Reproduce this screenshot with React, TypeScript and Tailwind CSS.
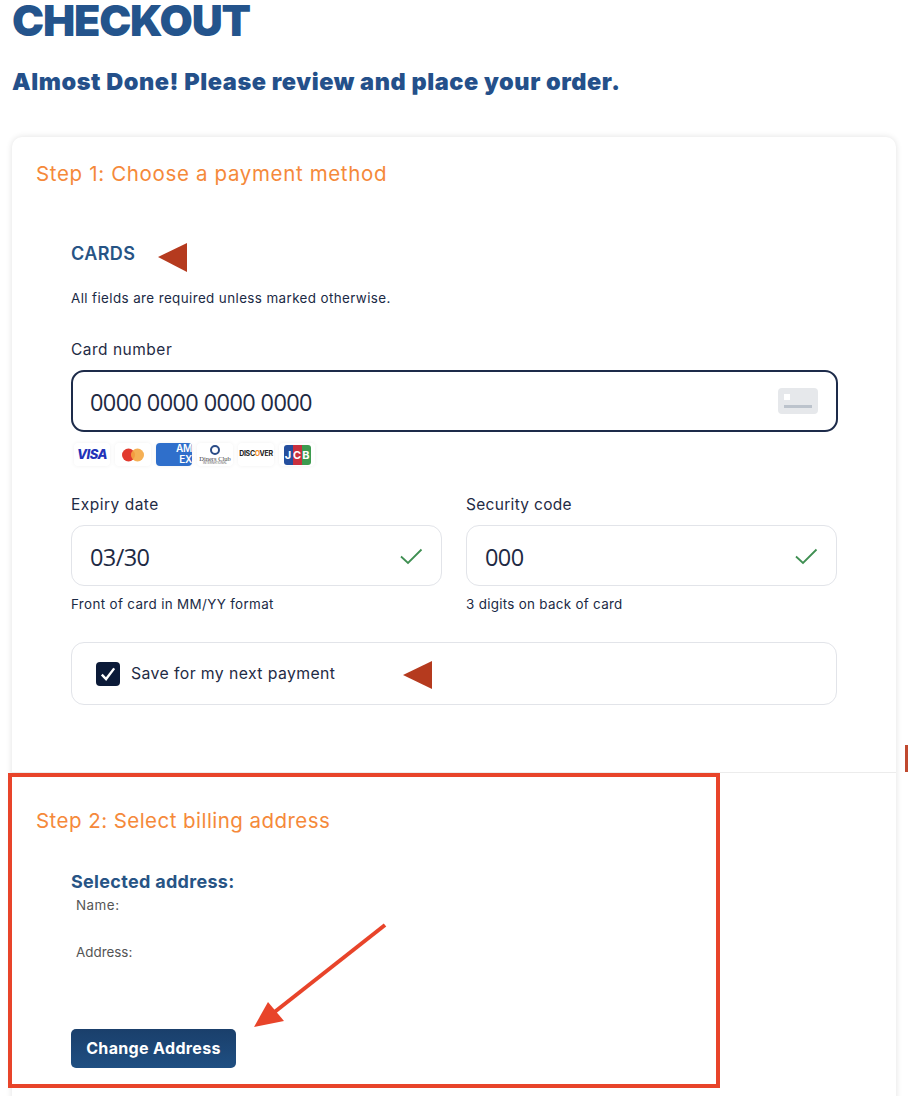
import React from "react";

const Chip = ({ children, cls = "" }: { children: React.ReactNode; cls?: string }) => (
  <div className={`w-9 h-[23px] rounded-[4px] bg-white shadow-[0_0_4px_rgba(0,0,0,0.06)] flex items-center justify-center overflow-hidden relative ${cls}`}>
    {children}
  </div>
);

const Check = () => (
  <svg width="24" height="24" viewBox="0 0 24 24" fill="none" stroke="#3f8f52" strokeWidth="1.8">
    <path d="M2 12.5 L9 19 L22.5 5.5" />
  </svg>
);

export default function App() {
  return (
    <div className="relative w-[908px] h-[1096px] overflow-hidden bg-white font-['Inter',sans-serif]">
      <div className="pl-3 h-[137px]">
        <h1 className="h-[46px] text-[43px] leading-[41px] font-black tracking-[-1.2px] text-[#24548c]">
          CHECKOUT
        </h1>
        <h2 className="mt-[21px] text-[23.5px] leading-[30px] font-black tracking-[0.55px] text-[#24508a]">
          Almost Done! Please review and place your order.
        </h2>
      </div>

      <div className="ml-3 w-[884px] h-[1000px] rounded-[10px] bg-white shadow-[0_0_6px_rgba(0,0,0,0.12)]">
        <div className="h-[636px] border-b border-[#ececec]">
          <div className="pl-6 pt-[23px] text-[20.5px] leading-[28px] tracking-[0.65px] text-[#f5893a]">
            Step 1: Choose a payment method
          </div>
          <div className="pl-[59px] pr-[58px]">
            <div className="mt-[54px] text-[18px] leading-[24px] font-semibold tracking-[0.4px] text-[#275485]">CARDS</div>
            <div className="mt-[23px] text-[13.4px] leading-[18px] tracking-[0.4px] text-[#1b2a45]">
              All fields are required unless marked otherwise.
            </div>
            <div className="mt-[33px] text-[15.5px] leading-[20px] tracking-[0.5px] text-[#1f2b45]">Card number</div>
            <div className="mt-[10px] h-[62px] rounded-[13px] border-2 border-[#1d2b4a] flex items-center justify-between pl-[17px] pr-[18px]">
              <span className="pt-1 font-['Open_Sans',sans-serif] text-[23.5px] tracking-[-0.6px] text-[#1e2a44]">0000 0000 0000 0000</span>
              <div className="relative w-10 h-[26px] rounded-[4px] bg-[#e6e8eb]">
                <div className="absolute left-[6px] top-[6px] w-[6px] h-[6px] bg-white" />
                <div className="absolute left-[6px] bottom-[6px] w-7 h-[3px] bg-[#bcc3cc]" />
              </div>
            </div>
            <div className="mt-[11px] pl-[3px] flex gap-[5px]">
              <Chip><span className="text-[13px] font-extrabold italic text-[#2232b8] tracking-[-0.5px]">VISA</span></Chip>
              <Chip>
                <svg width="24" height="14" viewBox="0 0 24 14">
                  <circle cx="7.5" cy="7" r="6.5" fill="#e23a2e" />
                  <circle cx="16.5" cy="7" r="6.5" fill="#f4a742" fillOpacity="0.9" />
                </svg>
              </Chip>
              <Chip cls="!bg-[#2f6fcb]">
                <span className="absolute right-0 top-0 text-[10px] leading-[11px] font-semibold text-white text-right tracking-[-0.3px]">
                  AM<br />EX
                </span>
              </Chip>
              <Chip>
                <div className="flex flex-col items-center">
                  <div className="w-[10px] h-[10px] rounded-full border-2 border-[#2a4c87]" />
                  <span className="font-['Liberation_Serif',serif] text-[6.5px] leading-[7px] text-[#444] whitespace-nowrap">Diners Club</span>
                  <span className="text-[3px] leading-[3px] text-[#555] whitespace-nowrap">INTERNATIONAL</span>
                </div>
              </Chip>
              <Chip><span className="text-[7px] font-bold tracking-[-0.3px] text-[#222]">DISC<span className="text-[#f08a24]">O</span>VER</span></Chip>
              <Chip>
                <div className="flex h-[20px] w-[27px]">
                  <div className="flex-1 rounded-l-[3px] bg-[#244f9e] text-white text-[11px] font-bold leading-[20px] text-center">J</div>
                  <div className="flex-1 bg-[#c9303e] text-white text-[11px] font-bold leading-[20px] text-center">C</div>
                  <div className="flex-1 rounded-r-[3px] bg-[#3d9b4f] text-white text-[11px] font-bold leading-[20px] text-center">B</div>
                </div>
              </Chip>
            </div>
            <div className="mt-[29px] mr-[1px] grid grid-cols-2 gap-x-6">
              <div>
                <div className="text-[15.5px] leading-[20px] tracking-[0.5px] text-[#1f2b45]">Expiry date</div>
                <div className="mt-[10px] h-[61px] rounded-[13px] border border-[#e2e4e9] flex items-center justify-between pl-[18px] pr-[18px]">
                  <span className="pt-1 font-['Open_Sans',sans-serif] text-[23.5px] tracking-[-0.6px] text-[#1e2a44]">03/30</span>
                  <Check />
                </div>
                <div className="mt-[9px] text-[13.4px] leading-[18px] tracking-[0.35px] text-[#1b2a45]">Front of card in MM/YY format</div>
              </div>
              <div>
                <div className="text-[15.5px] leading-[20px] tracking-[0.3px] text-[#1f2b45]">Security code</div>
                <div className="mt-[10px] h-[61px] rounded-[13px] border border-[#e2e4e9] flex items-center justify-between pl-[18px] pr-[18px]">
                  <span className="pt-1 font-['Open_Sans',sans-serif] text-[23.5px] tracking-[-0.6px] text-[#1e2a44]">000</span>
                  <Check />
                </div>
                <div className="mt-[9px] text-[13.4px] leading-[18px] tracking-[0.3px] text-[#1b2a45]">3 digits on back of card</div>
              </div>
            </div>
            <div className="mt-[29px] mr-[1px] h-[63px] rounded-[13px] border border-[#e2e4e9] flex items-center pl-6 gap-[11px]">
              <div className="w-6 h-6 rounded-[4px] bg-[#0b1a38] flex items-center justify-center">
                <svg width="18" height="18" viewBox="0 0 16 16" fill="none" stroke="white" strokeWidth="2.1">
                  <path d="M2.5 8.5 L6.3 12.5 L13.5 3" />
                </svg>
              </div>
              <span className="text-[15.8px] tracking-[0.4px] text-[#1f2b45]">Save for my next payment</span>
            </div>
          </div>
        </div>

        <div className="pl-6 pt-[34px] text-[20.5px] leading-[28px] tracking-[0.45px] text-[#f5893a]">
          Step 2: Select billing address
        </div>
        <div className="pl-[59px]">
          <div className="mt-[35px] text-[18px] leading-[24px] font-bold tracking-[0.3px] text-[#275485]">Selected address:</div>
          <div className="mt-[2px] pl-[5px] text-[13.4px] leading-[18px] tracking-[0.5px] text-[#555]">Name:</div>
          <div className="mt-[29px] pl-[5px] text-[13.4px] leading-[18px] text-[#555]">Address:</div>
          <button className="mt-[68px] w-[165px] h-[39px] pb-[2px] rounded-[5px] bg-gradient-to-b from-[#1a3f6b] to-[#1f4f82] text-white text-[16px] font-bold tracking-[0.35px]">
            Change Address
          </button>
        </div>
      </div>

      {/* Annotations drawn over the screenshot */}
      <div className="absolute left-2 top-[773px] w-[712px] h-[315px] border-[4px] border-[#e8442a] pointer-events-none" />
      <svg className="absolute left-0 top-0 pointer-events-none" width="908" height="1096">
        <polygon points="158,257 187,243 187,272" fill="#b53a1e" />
        <polygon points="403,675 432,661 432,689" fill="#b53a1e" />
        <line x1="385" y1="925" x2="272" y2="1014" stroke="#e8442a" strokeWidth="4" />
        <polygon points="254,1027 268,1002 284,1021" fill="#e8442a" />
        <rect x="905" y="745" width="3" height="27" fill="#c0492f" />
      </svg>
    </div>
  );
}
